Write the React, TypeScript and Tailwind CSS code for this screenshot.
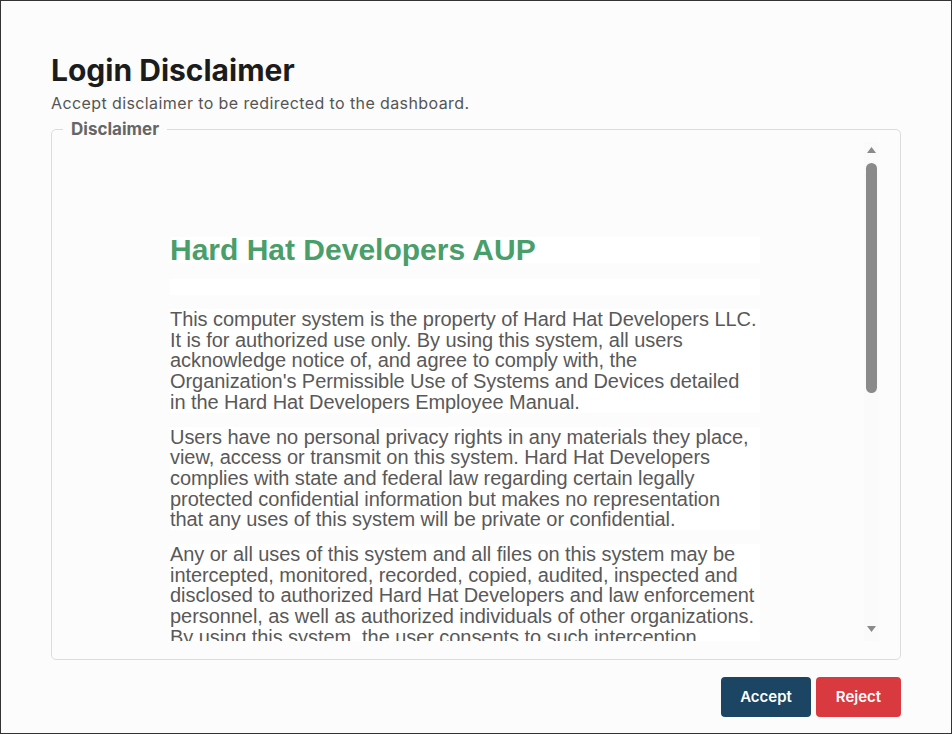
import React from 'react';

const paragraphs = [
  "This computer system is the property of Hard Hat Developers LLC. It is for authorized use only. By using this system, all users acknowledge notice of, and agree to comply with, the Organization's Permissible Use of Systems and Devices detailed in the Hard Hat Developers Employee Manual.",
  'Users have no personal privacy rights in any materials they place, view, access or transmit on this system. Hard Hat Developers complies with state and federal law regarding certain legally protected confidential information but makes no representation that any uses of this system will be private or confidential.',
  'Any or all uses of this system and all files on this system may be intercepted, monitored, recorded, copied, audited, inspected and disclosed to authorized Hard Hat Developers and law enforcement personnel, as well as authorized individuals of other organizations. By using this system, the user consents to such interception, monitoring, recording, copying, auditing, inspection, and disclosure at the discretion of authorized Hard Hat Developers personnel.',
  'Unauthorized or improper use of this system may result in administrative disciplinary action, civil charges/criminal penalties, and/or other sanctions as set forth in the Hard Hat Developers Employee Manual.',
];

// thin scrollbar drawn like the browser's default one
const ScrollBar = () => (
  <div className="w-[15px] flex flex-col items-center bg-[#fafafa]">
    <svg width="9" height="6" viewBox="0 0 9 6" className="mt-[5px]">
      <path d="M4.5 0L9 6H0z" fill="#8a8a8a" />
    </svg>
    <div className="w-[11px] h-[230px] mt-[10px] rounded-full bg-[#8a8a8a]" />
    <div className="flex-1" />
    <svg width="9" height="6" viewBox="0 0 9 6" className="mb-[9px]">
      <path d="M0 0H9L4.5 6z" fill="#8a8a8a" />
    </svg>
  </div>
);

const App = () => {
  return (
    <div className="w-[952px] h-[734px] border border-[#333] bg-[#fcfcfc] px-[50px] pt-[50px] font-['Inter',sans-serif] overflow-hidden">
      <h1 className="text-[30px] leading-[38px] font-bold text-[#1c1c1c]">Login Disclaimer</h1>
      <p className="text-[16px] leading-[22px] text-[#555] tracking-[0.4px] mt-[3px]">
        Accept disclaimer to be redirected to the dashboard.
      </p>

      <fieldset className="mt-[5px] border border-[#dcdcdc] rounded-[5px] pl-[11px] pr-[21px] pb-[18px]">
        <legend className="px-2 text-[17px] leading-[20px] font-bold text-[#666]">Disclaimer</legend>
        <div className="mt-[3px] h-[499px] flex">
          <div className="flex-1 overflow-hidden pl-[3px]">
            <div className="w-[590px] mx-auto pt-[95px] font-['Liberation_Sans',Arial,sans-serif] text-[#595959]">
              <h2 className="bg-white text-[30px] leading-[26px] font-bold text-[#4a9e6a]">Hard Hat Developers AUP</h2>
              <div className="bg-white h-[16px] mt-[16px]" />
              <div className="flex flex-col gap-[14px] mt-[14px]">
                {paragraphs.map((text, i) => (
                  <p key={i} className="bg-white text-[20px] leading-[20.7px] tracking-[-0.06px] pr-[2px]">
                    {text}
                  </p>
                ))}
              </div>
            </div>
          </div>
          <ScrollBar />
        </div>
      </fieldset>

      <div className="flex justify-end gap-[5px] mt-[17px]">
        <button className="h-[40px] w-[90px] rounded-[4px] bg-[#1b4563] text-white text-[15px] font-semibold">
          Accept
        </button>
        <button className="h-[40px] w-[85px] rounded-[4px] bg-[#d93a40] text-white text-[15px] font-semibold">
          Reject
        </button>
      </div>
    </div>
  );
};

export default App;
